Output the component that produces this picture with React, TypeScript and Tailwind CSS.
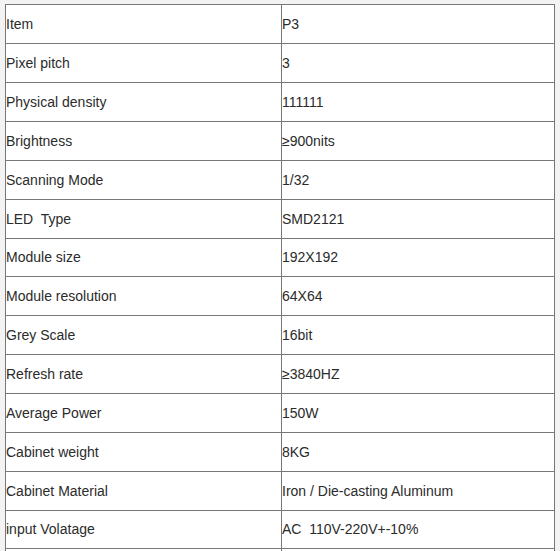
import React from 'react';

const rows: [string, string][] = [
  ['Item', 'P3'],
  ['Pixel pitch', '3'],
  ['Physical density', '111111'],
  ['Brightness', '≥900nits'],
  ['Scanning Mode', '1/32'],
  ['LED  Type', 'SMD2121'],
  ['Module size', '192X192'],
  ['Module resolution', '64X64'],
  ['Grey Scale', '16bit'],
  ['Refresh rate', '≥3840HZ'],
  ['Average Power', '150W'],
  ['Cabinet weight', '8KG'],
  ['Cabinet Material', 'Iron / Die-casting Aluminum'],
  ['input Volatage', 'AC  110V-220V+-10%'],
];

const App: React.FC = () => {
  return (
    <div className="w-[560px] h-[551px] bg-[#f3f3f3] pt-[4px] pl-[5px] overflow-hidden font-['Liberation_Sans',Arial,sans-serif] text-[14px] text-[#2b2b2b]">
      <div className="w-[550px] bg-white border-t border-l border-[#777]">
        {rows.map(([label, value], i) => (
          <div
            key={label}
            className={`flex border-b border-[#777] ${i === 6 || i === 13 ? 'h-[38px]' : 'h-[39px]'}`}
          >
            <div className="w-[276px] shrink-0 border-r border-[#777] flex items-center whitespace-pre">
              {label}
            </div>
            <div className="flex-1 border-r border-[#777] flex items-center whitespace-pre">
              {value}
            </div>
          </div>
        ))}
        {/* next row, cut off by the viewport */}
        <div className="flex h-[39px]">
          <div className="w-[276px] shrink-0 border-r border-[#777]" />
          <div className="flex-1 border-r border-[#777]" />
        </div>
      </div>
    </div>
  );
};

export default App;
